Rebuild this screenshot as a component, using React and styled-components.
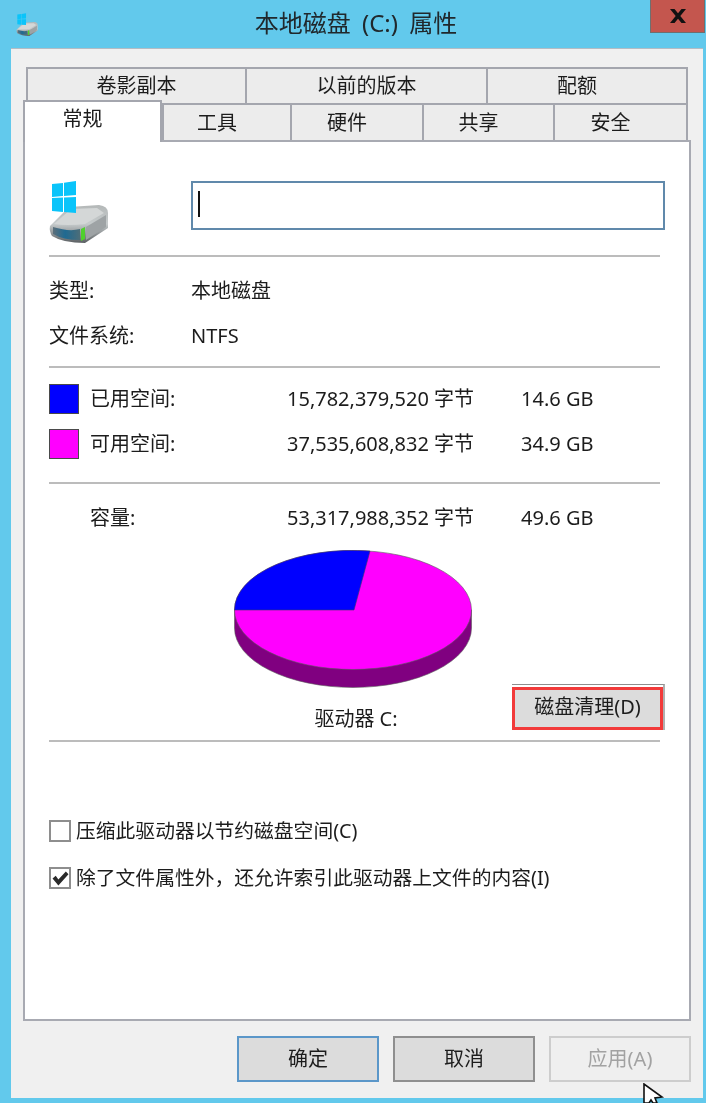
import React from "react";
import styled, { createGlobalStyle } from "styled-components";

const GlobalStyle = createGlobalStyle`
  html, body {
    margin: 0;
    padding: 0;
    background: #62c9ec;
  }
  * {
    box-sizing: border-box;
  }
`;

const Page = styled.div`
  position: relative;
  width: 706px;
  height: 1103px;
  overflow: hidden;
  background: #62c9ec;
  color: #1c1c1c;
  font-family: "Noto Sans", "Noto Sans CJK SC", sans-serif;
  font-size: 20px;
  line-height: 1;
  filter: blur(0.35px);
`;

const TitleBar = styled.div`
  display: grid;
  grid-template-columns: 15px 25px 1fr 55px 1px;
  height: 48px;
`;

const TitleIcon = styled.div`
  grid-column: 2;
  margin-top: 13px;
`;

const Title = styled.div`
  grid-column: 3;
  padding: 11px 0 0 22px;
  text-align: center;
  font-size: 24px;
  word-spacing: 5px;
  color: #20282c;
`;

const CloseButton = styled.div`
  grid-column: 4;
  display: flex;
  align-items: center;
  justify-content: center;
  height: 33px;
  background: #c4564e;
  border: 1px solid #6f6f6f;
  border-top: none;
`;

const Body = styled.div`
  width: 692px;
  height: 1050px;
  margin-left: 11px;
  padding: 18px 0 0 12px;
  background: #f0f0f0;
  border-top: 1px solid #b4bcc4;
`;

const TabRow = styled.div`
  display: flex;
  height: ${({ $height }) => $height}px;
  margin-left: 3px;
  width: 662px;
`;

const Tab = styled.div`
  display: flex;
  align-items: center;
  justify-content: center;
  width: ${({ $width }) => $width}px;
  padding-right: ${({ $short }) => ($short ? 20 : 0)}px;
  background: #ececec;
  border: 2px solid #a4a6ae;
  border-left-width: ${({ $first }) => ($first ? 2 : 0)}px;
  border-bottom: none;
`;

const ActiveTab = styled.div`
  position: relative;
  z-index: 2;
  display: flex;
  justify-content: center;
  width: 139px;
  height: 42px;
  margin: -3px 0 0 -3px;
  padding: 7px 20px 0 0;
  background: #fff;
  border: 2px solid #a4a6ae;
  border-bottom: none;
`;

const Panel = styled.div`
  position: relative;
  display: flex;
  flex-direction: column;
  width: 668px;
  height: 881px;
  padding: 37px 24px 0;
  background: #fff;
  border: 2px solid #a8aab2;
`;

const Header = styled.div`
  display: flex;
  height: 66px;
`;

const IconSlot = styled.div`
  flex: none;
  width: 62px;
  margin-top: 1px;
`;

const NameField = styled.div`
  display: flex;
  align-items: center;
  width: 474px;
  height: 49px;
  margin: 2px 0 0 80px;
  padding-left: 5px;
  border: 2px solid #6089ab;
  &::before {
    content: "";
    width: 2px;
    height: 26px;
    margin-bottom: 4px;
    background: #111;
  }
`;

const Divider = styled.div`
  flex: none;
  width: 611px;
  height: 2px;
  margin-top: ${({ $top }) => $top}px;
  background: #bcbcbc;
`;

const InfoRow = styled.div`
  display: grid;
  grid-template-columns: 142px 1fr;
  align-items: center;
  height: 45px;
  margin-top: ${({ $top }) => $top || 0}px;
`;

const UsageRow = styled.div`
  display: grid;
  grid-template-columns: 41px 197px 234px 1fr;
  align-items: center;
  height: 30px;
  margin-top: ${({ $top }) => $top}px;
`;

const Swatch = styled.div`
  width: 30px;
  height: 30px;
  background: ${({ $color }) => $color};
  border: 1px solid #4a4a4a;
`;

const ChartArea = styled.div`
  display: flex;
  align-items: flex-end;
  height: 180px;
  margin-top: ${({ $top }) => $top}px;
`;

const ChartColumn = styled.div`
  display: flex;
  flex: none;
  flex-direction: column;
  align-items: center;
  width: 238px;
  height: 100%;
  margin: 0 40px 0 185px;
`;

const Caption = styled.div`
  margin: 20px 0 0 6px;
`;

const CleanupFrame = styled.div`
  flex: none;
  width: 153px;
  height: 46px;
  padding-top: 2px;
  border-top: 1px solid #8e8e8e;
  border-right: 2px solid #b0b0b0;
  background: #fff;
`;

const CleanupButton = styled.div`
  display: flex;
  align-items: center;
  justify-content: center;
  width: 151px;
  height: 43px;
  padding-bottom: 4px;
  background: #dcdcdc;
  border: 3px solid #f23a3a;
`;

const CheckRow = styled.div`
  display: flex;
  align-items: center;
  gap: 5px;
  height: 22px;
  margin-top: ${({ $top }) => $top}px;
  font-size: 19.8px;
`;

const CheckBox = styled.div`
  display: flex;
  align-items: center;
  justify-content: center;
  flex: none;
  width: 22px;
  height: 22px;
  background: #fff;
  border: 2px solid #8e8e8e;
`;

const Footer = styled.div`
  display: flex;
  justify-content: flex-end;
  gap: 14px;
  width: 668px;
  margin-top: 15px;
`;

const DialogButton = styled.div`
  display: flex;
  align-items: center;
  justify-content: center;
  width: 142px;
  height: 46px;
  background: ${({ $disabled }) => ($disabled ? "#efefef" : "#dcdcdc")};
  color: ${({ $disabled }) => ($disabled ? "#a2a2a2" : "#1c1c1c")};
  border: 2px solid ${({ $border }) => $border};
`;

const Cursor = styled.svg`
  position: absolute;
  left: 643px;
  top: 1083px;
`;

const DriveIcon = ({ width, height }) => (
  <svg width={width} height={height} viewBox="0 0 62 66">
    <defs>
      <linearGradient id="driveBody" x1="0" y1="0" x2="0" y2="1">
        <stop offset="0" stopColor="#b4b8b8" />
        <stop offset="0.5" stopColor="#c6cbcc" />
        <stop offset="1" stopColor="#5a5f62" />
      </linearGradient>
      <linearGradient id="driveFace" x1="0" y1="0" x2="1" y2="0">
        <stop offset="0" stopColor="#5c6f7a" />
        <stop offset="0.45" stopColor="#1f6a92" />
        <stop offset="1" stopColor="#4d6d78" />
      </linearGradient>
    </defs>
    <path d="M1 46 L20 27 L50 25 Q59 26 59 33 L59 48 L36 63 Q14 63 3 56 Q0 51 1 46 Z" fill="url(#driveBody)" />
    <path d="M5 44 L22 29 L48 28 L55 33 L36 44 Q18 46 5 44 Z" fill="#d4d7d7" />
    <path d="M4 47 Q20 52 31 49 L31 60 Q14 60 4 54 Z" fill="url(#driveFace)" />
    <path d="M37 47 L57 35 L57 47 L37 60 Z" fill="#9ea3a5" />
    <path d="M32 49 L36 47 L36 59 L32 61 Z" fill="#4fd02c" />
    <path d="M3 4 L14 3 L14 16 L3 17 Z M15 2.8 L27 1 L27 15 L15 16 Z M3 18 L14 17.5 L14 32 L3 31 Z M15 17.5 L27 17 L27 33 L15 32 Z" fill="#0ac4fa" />
  </svg>
);

const Pie = () => (
  <svg width="238" height="139" viewBox="0 0 238 139">
    <path d="M0.5 60 L0.5 78 A118.5 59.5 0 0 0 237.5 78 L237.5 60 Z" fill="#800080" stroke="#5a5a5a" strokeWidth="0.6" />
    <ellipse cx="119" cy="60" rx="118.5" ry="59.5" fill="#ff00ff" stroke="#5a5a5a" strokeWidth="0.6" />
    <path d="M0.5 60 A118.5 59.5 0 0 1 136 1 L120 60 Z" fill="#0000ff" stroke="#3a3a6a" strokeWidth="0.6" />
  </svg>
);

const App = () => {
  return (
    <Page>
      <GlobalStyle />
      <TitleBar>
        <TitleIcon>
          <DriveIcon width={25} height={24} />
        </TitleIcon>
        <Title>本地磁盘 (C:) 属性</Title>
        <CloseButton>
          <svg width="18" height="14" viewBox="0 0 18 14">
            <path d="M1 0 L5.5 0 L9 4.2 L12.5 0 L17 0 L11.3 7 L17 14 L12.5 14 L9 9.8 L5.5 14 L1 14 L6.7 7 Z" fill="#111" />
          </svg>
        </CloseButton>
      </TitleBar>
      <Body>
        <TabRow $height={36}>
          <Tab $width={221} $first>卷影副本</Tab>
          <Tab $width={241}>以前的版本</Tab>
          <Tab $width={200} $short>配额</Tab>
        </TabRow>
        <TabRow $height={37}>
          <ActiveTab>常规</ActiveTab>
          <Tab $width={130} $first $short>工具</Tab>
          <Tab $width={132} $short>硬件</Tab>
          <Tab $width={131} $short>共享</Tab>
          <Tab $width={133} $short>安全</Tab>
        </TabRow>
        <Panel>
          <Header>
            <IconSlot>
              <DriveIcon width={62} height={66} />
            </IconSlot>
            <NameField />
          </Header>
          <Divider $top={10} />
          <InfoRow $top={11}>
            <span>类型:</span>
            <span>本地磁盘</span>
          </InfoRow>
          <InfoRow>
            <span>文件系统:</span>
            <span>NTFS</span>
          </InfoRow>
          <Divider $top={8} />
          <UsageRow $top={16}>
            <Swatch $color="#0000ff" />
            <span>已用空间:</span>
            <span>15,782,379,520 字节</span>
            <span>14.6 GB</span>
          </UsageRow>
          <UsageRow $top={15}>
            <Swatch $color="#ff00ff" />
            <span>可用空间:</span>
            <span>37,535,608,832 字节</span>
            <span>34.9 GB</span>
          </UsageRow>
          <Divider $top={23} />
          <UsageRow $top={19}>
            <span />
            <span>容量:</span>
            <span>53,317,988,352 字节</span>
            <span>49.6 GB</span>
          </UsageRow>
          <ChartArea $top={17}>
            <ChartColumn>
              <Pie />
              <Caption>驱动器 C:</Caption>
            </ChartColumn>
            <CleanupFrame>
              <CleanupButton>磁盘清理(D)</CleanupButton>
            </CleanupFrame>
          </ChartArea>
          <Divider $top={10} />
          <CheckRow $top={78}>
            <CheckBox />
            <span>压缩此驱动器以节约磁盘空间(C)</span>
          </CheckRow>
          <CheckRow $top={25}>
            <CheckBox>
              <svg width="17" height="15" viewBox="0 0 16 14">
                <path d="M0.5 7 L3.5 4.5 L6 8 L13 0.5 L15.5 3 L6 13.5 Z" fill="#2a2a2a" />
              </svg>
            </CheckBox>
            <span>除了文件属性外，还允许索引此驱动器上文件的内容(I)</span>
          </CheckRow>
        </Panel>
        <Footer>
          <DialogButton $border="#5b97c9">确定</DialogButton>
          <DialogButton $border="#8f8f8f">取消</DialogButton>
          <DialogButton $border="#cdcdcd" $disabled>应用(A)</DialogButton>
        </Footer>
      </Body>
      <Cursor width="22" height="20" viewBox="0 0 22 20">
        <path d="M1 1 L1 20 L6 20 L8 17 L10 20 L14 20 L12 15 L19 14 Z" fill="#fff" stroke="#111" strokeWidth="1.6" />
      </Cursor>
    </Page>
  );
};

export default App;
